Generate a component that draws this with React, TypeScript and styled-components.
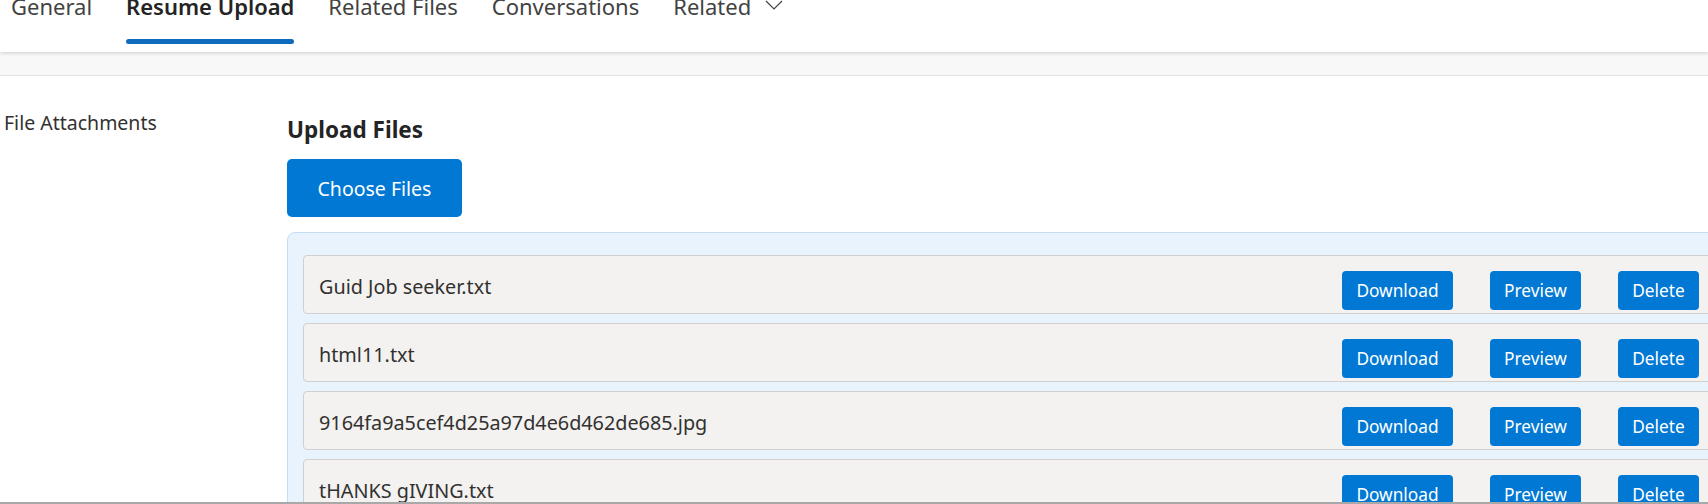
import React from "react";
import styled, { createGlobalStyle } from "styled-components";

const Global = createGlobalStyle`
  html, body { margin: 0; padding: 0; background: #ffffff; overflow: hidden; }
  body { font-family: "Noto Sans", "Open Sans", sans-serif; }
  * { box-sizing: border-box; }
`;

const Page = styled.div`
  height: 504px;
  overflow: hidden;
  border-bottom: 2px solid #a8a8a8;
  display: flex;
  flex-direction: column;
`;

const Header = styled.header`
  height: 52px;
  flex: none;
  background: #ffffff;
  box-shadow: 0 1px 4px rgba(0, 0, 0, 0.18);
  position: relative;
  z-index: 1;
  overflow: hidden;
`;

const TabList = styled.nav`
  display: flex;
  align-items: flex-start;
  gap: 34px;
  padding-left: 11px;
  margin-top: -9px;
`;

const Tab = styled.div<{ $active?: boolean }>`
  display: flex;
  flex-direction: column;
  align-items: stretch;
  font-size: 22px;
  line-height: 30px;
  color: ${(p) => (p.$active ? "#242424" : "#424242")};
  font-weight: ${(p) => (p.$active ? 600 : 400)};
  white-space: nowrap;
`;

const TabLabel = styled.span`
  display: flex;
  align-items: flex-start;
  gap: 14px;
`;

const Underline = styled.span<{ $active?: boolean }>`
  height: 5px;
  margin-top: 18px;
  border-radius: 3px;
  background: ${(p) => (p.$active ? "#0f6cbd" : "transparent")};
`;

const Band = styled.div`
  height: 24px;
  flex: none;
  background: #f8f8f8;
  border-bottom: 1px solid #e3e3e3;
`;

const Main = styled.main`
  display: grid;
  grid-template-columns: 283px 1444px;
  padding: 34px 0 0 4px;
`;

const FieldLabel = styled.div`
  font-size: 19.5px;
  line-height: 26px;
  color: #323130;
`;

const Content = styled.section`
  display: flex;
  flex-direction: column;
  align-items: flex-start;
`;

const Heading = styled.h2`
  margin: 5px 0 0;
  font-size: 22.5px;
  line-height: 30px;
  font-weight: 700;
  color: #242424;
`;

const ChooseButton = styled.button`
  margin-top: 14px;
  width: 175px;
  height: 58px;
  border: none;
  border-radius: 5px;
  background: #0078d4;
  color: #ffffff;
  font-family: inherit;
  font-size: 19.5px;
`;

const FileList = styled.div`
  margin-top: 15px;
  align-self: stretch;
  background: #e9f3fd;
  border: 1px solid #c4ddf4;
  border-radius: 8px;
  padding: 22px 15px 20px;
  display: flex;
  flex-direction: column;
  gap: 9px;
`;

const FileRow = styled.div`
  display: flex;
  align-items: flex-start;
  background: #f3f2f1;
  border: 1px solid #d2d0ce;
  border-radius: 4px;
  padding: 15px 15px 3px;
`;

const FileName = styled.span`
  flex: 1;
  font-size: 19.8px;
  line-height: 32px;
  color: #323130;
`;

const Actions = styled.div`
  display: flex;
  gap: 37px;
`;

const ActionButton = styled.button<{ $w: number }>`
  width: ${(p) => p.$w}px;
  height: 39px;
  padding: 0;
  border: none;
  border-radius: 4px;
  background: #0078d4;
  color: #ffffff;
  font-family: inherit;
  font-size: 17.3px;
`;

const Chevron = () => (
  <svg width="18" height="10" viewBox="0 0 18 10" fill="none" style={{ marginTop: 9 }}>
    <path d="M1 1l8 8 8-8" stroke="#424242" strokeWidth="1.2" />
  </svg>
);

const tabs = ["General", "Resume Upload", "Related Files", "Conversations"];
const files = [
  "Guid Job seeker.txt",
  "html11.txt",
  "9164fa9a5cef4d25a97d4e6d462de685.jpg",
  "tHANKS gIVING.txt",
];

export default function App() {
  return (
    <>
      <Global />
      <Page>
        <Header>
          <TabList>
            {tabs.map((t) => (
              <Tab key={t} $active={t === "Resume Upload"}>
                <TabLabel>{t}</TabLabel>
                <Underline $active={t === "Resume Upload"} />
              </Tab>
            ))}
            <Tab>
              <TabLabel>
                Related
                <Chevron />
              </TabLabel>
              <Underline />
            </Tab>
          </TabList>
        </Header>
        <Band />
        <Main>
          <FieldLabel>File Attachments</FieldLabel>
          <Content>
            <Heading>Upload Files</Heading>
            <ChooseButton>Choose Files</ChooseButton>
            <FileList>
              {files.map((f) => (
                <FileRow key={f}>
                  <FileName>{f}</FileName>
                  <Actions>
                    <ActionButton $w={111}>Download</ActionButton>
                    <ActionButton $w={91}>Preview</ActionButton>
                    <ActionButton $w={81}>Delete</ActionButton>
                  </Actions>
                </FileRow>
              ))}
            </FileList>
          </Content>
        </Main>
      </Page>
    </>
  );
}
